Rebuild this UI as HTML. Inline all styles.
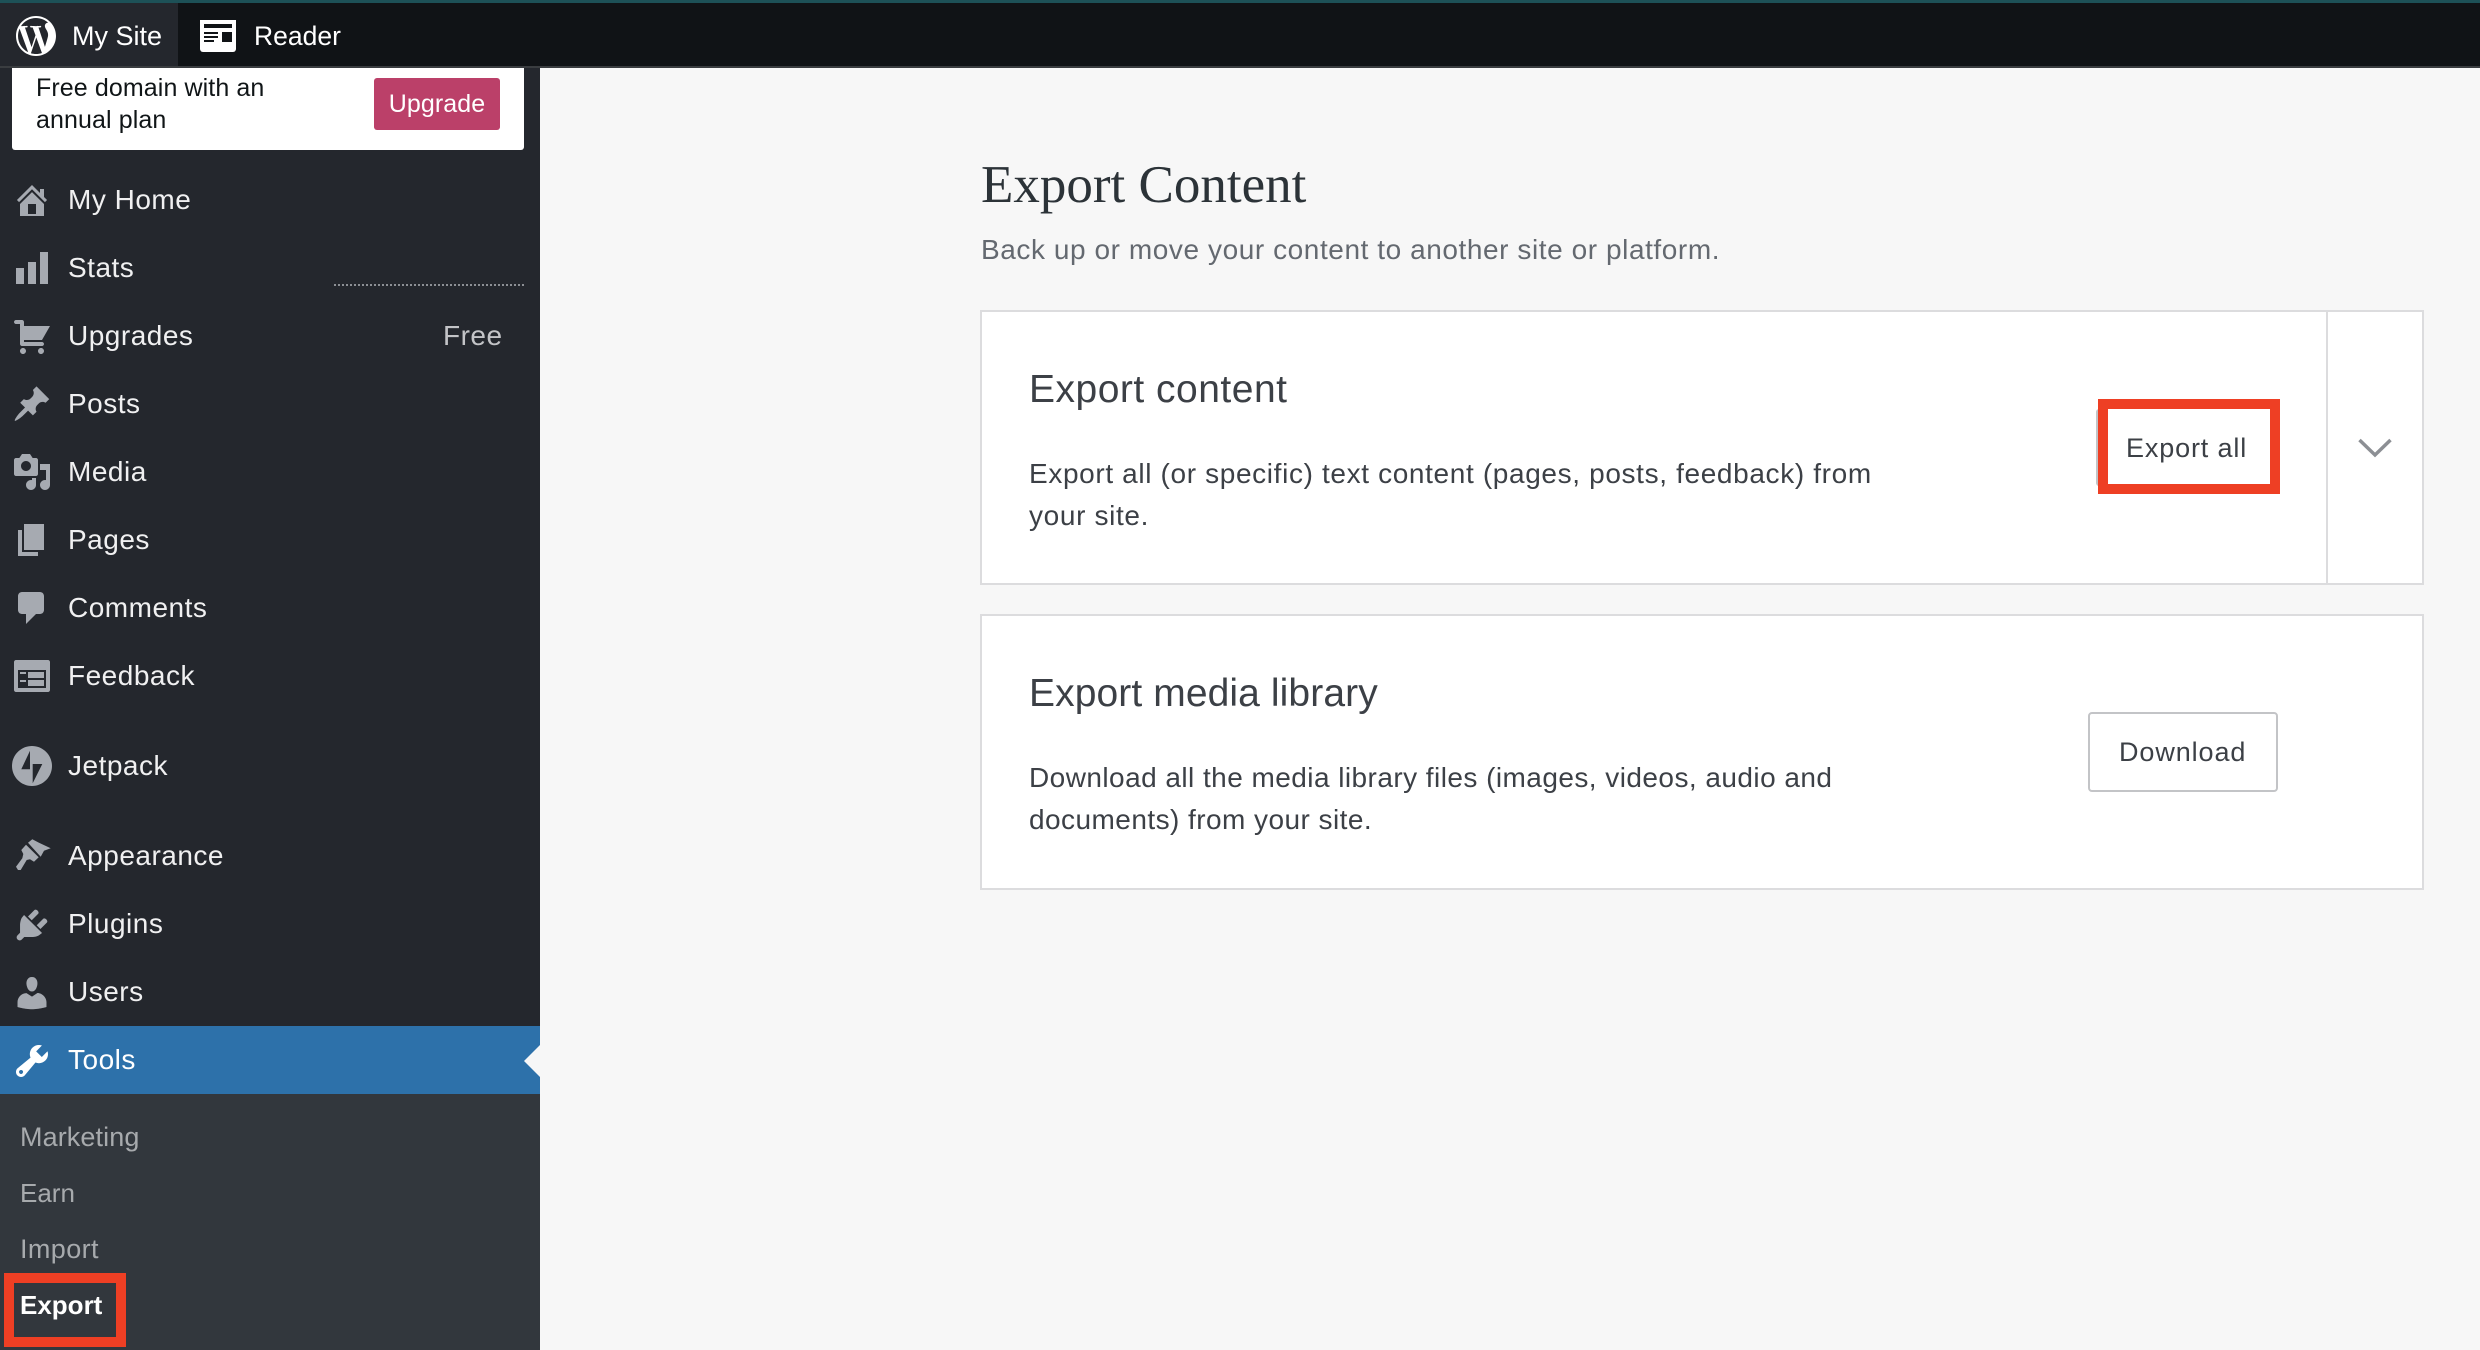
<!DOCTYPE html>
<html lang="en">
<head>
<meta charset="utf-8">
<title>Export Content</title>
<style>
html,body{margin:0;padding:0;width:2480px;height:1350px;overflow:hidden;background:#f7f7f7;font-family:"Liberation Sans",sans-serif}
.a{position:absolute;white-space:nowrap}
#bar{left:0;top:0;width:2480px;height:68px;background:#101316;border-bottom:0}
#side{left:0;top:68px;width:540px;height:1282px;background:#24272d}
.m{left:68px;font-size:28px;letter-spacing:.5px;line-height:40px;color:#f0f0f1}
.i{left:12px;width:40px;height:40px;fill:#a6aab1}
.s{left:20px;font-size:27px;letter-spacing:.1px;line-height:40px;color:#a7aaad}
.card{background:#fff;border:2px solid #dcdcde;box-sizing:border-box}
.t{font-size:39px;letter-spacing:.5px;line-height:48px;color:#3c4046;left:1029px}
.d{font-size:28px;letter-spacing:.64px;line-height:42px;color:#3c4046;left:1029px}
.b{font-size:27px;line-height:40px;color:#3c4046}
</style>
</head>
<body>
<div class="a" id="bar"></div>
<div class="a" style="left:0;top:0;width:2480px;height:3px;background:#1d5157"></div>
<div class="a" style="left:0;top:66px;width:2480px;height:2px;background:#3a3d40"></div>
<div class="a" style="left:0;top:3px;width:178px;height:63px;background:#24272d"></div>
<svg class="a" style="left:12px;top:12px;width:48px;height:48px;fill:#fff" viewBox="0 0 24 24"><path d="M12 2C6.486 2 2 6.486 2 12s4.486 10 10 10 10-4.486 10-10S17.514 2 12 2zM3.010 12c0-1.304.28-2.540.78-3.660l4.290 11.750c-3-1.460-5.070-4.530-5.070-8.090zM12 20.990c-.88 0-1.730-.13-2.540-.37l2.700-7.840 2.760 7.570c.02.04.04.09.06.12-.93.33-1.940.52-2.980.52zm1.240-13.210c.54-.03 1.030-.09 1.030-.09.48-.06.43-.77-.06-.74 0 0-1.460.11-2.400.11-.88 0-2.370-.11-2.370-.11-.48-.03-.54.71-.05.74 0 0 .46.06.95.09l1.410 3.870-1.980 5.940-3.300-9.810c.55-.03 1.040-.09 1.040-.09.48-.06.43-.77-.06-.74 0 0-1.460.11-2.400.11-.17 0-.37 0-.58-.01C6.100 4.600 8.870 3.010 12 3.010c2.330 0 4.460.89 6.050 2.350-.04 0-.08-.01-.12-.01-.88 0-1.500.77-1.500 1.590 0 .74.43 1.370.88 2.110.34.6.74 1.370.74 2.480 0 .77-.3 1.660-.68 2.910l-.9 3-3.230-9.660zm3.280 12c2.760-1.610 4.470-4.580 4.470-7.780 0-1.570-.41-3.040-1.100-4.300.04.29.06.59.06.93 0 .92-.17 1.950-.69 3.240l-2.740 7.910z"/></svg>
<div class="a" style="left:72px;top:16px;font-size:27px;line-height:40px;color:#fff">My Site</div>
<svg class="a" style="left:200px;top:20px;width:36px;height:32px" viewBox="0 0 36 32"><path fill="#fff" d="M0 0h36v29a3 3 0 0 1-3 3H3a3 3 0 0 1-3-3z"/><path fill="#101316" d="M4 4h28v4H4zM4 12h14v2H4zM4 16h14v2H4zM4 20h10v2H4zM22 12h10v10H22z"/></svg>
<div class="a" style="left:254px;top:16px;font-size:26.500px;line-height:40px;color:#fff">Reader</div>

<div class="a" id="side"></div>
<div class="a" style="left:12px;top:68px;width:512px;height:82px;background:#fff;border-radius:0 0 3px 3px"></div>
<div class="a" style="left:36px;top:72px;font-size:25px;letter-spacing:.1px;line-height:32px;color:#101517">Free domain with an<br>annual plan</div>
<div class="a" style="left:374px;top:78px;width:126px;height:52px;background:#bb4069;border-radius:3px;color:#fff;font-size:25px;letter-spacing:.1px;line-height:53px;text-align:center">Upgrade</div>
<div class="a" style="left:334px;top:284px;width:190px;height:0;border-top:2px dotted #8c8f94"></div>

<svg class="a i" style="top:180px" viewBox="0 0 20 20"><path d="M16 8.500l1.530 1.530-1.060 1.060L10 4.620l-6.470 6.470-1.060-1.060L10 2.500l4 4v-2h2v4zm-6-2.460l6 5.990V18H4v-5.970zM12 17v-5H8v5h4z"/></svg>
<div class="a m" style="top:180px">My Home</div>
<svg class="a i" style="top:248px" viewBox="0 0 20 20"><path d="M18 18V2h-4v16h4zm-6 0V7H8v11h4zm-6 0v-8H2v8h4z"/></svg>
<div class="a m" style="top:248px">Stats</div>
<svg class="a i" style="top:316px" viewBox="0 0 20 20"><path d="M6 13h9c.55 0 1 .45 1 1s-.45 1-1 1H5c-.55 0-1-.45-1-1V4H2c-.55 0-1-.45-1-1s.45-1 1-1h3c.55 0 1 .45 1 1v2h13l-4 7H6v1zm-.5 3c.83 0 1.500.67 1.500 1.500S6.330 19 5.500 19 4 18.330 4 17.500 4.670 16 5.500 16zm9 0c.83 0 1.500.67 1.500 1.500s-.67 1.500-1.500 1.500-1.500-.67-1.500-1.500.67-1.500 1.500-1.500z"/></svg>
<div class="a m" style="top:316px">Upgrades</div>
<div class="a m" style="top:316px;left:443px;color:#c3c4c7">Free</div>
<svg class="a i" style="top:384px" viewBox="0 0 20 20"><path d="M10.440 3.020l1.820-1.820 6.360 6.350-1.830 1.820c-1.050-.68-2.480-.57-3.410.36l-.75.75c-.92.93-1.040 2.350-.35 3.410l-1.830 1.820-2.410-2.410-2.800 2.790c-.42.42-3.380 2.710-3.800 2.290s1.860-3.390 2.280-3.810l2.790-2.790L4.100 9.360l1.830-1.820c1.050.69 2.480.57 3.400-.36l.75-.75c.93-.92 1.050-2.350.36-3.410z"/></svg>
<div class="a m" style="top:384px">Posts</div>
<svg class="a i" style="top:452px" viewBox="0 0 20 20"><path d="M13 11V4c0-.55-.45-1-1-1h-1.670L9 1H5L3.670 3H2c-.55 0-1 .45-1 1v7c0 .55.45 1 1 1h10c.55 0 1-.45 1-1zM7 4.500c1.380 0 2.500 1.120 2.500 2.500S8.380 9.500 7 9.500 4.500 8.380 4.500 7 5.620 4.500 7 4.500zM14 6h5v10.500c0 1.380-1.120 2.500-2.500 2.500S14 17.880 14 16.500s1.120-2.500 2.500-2.500c.17 0 .34.02.5.05V9h-3V6zm-4 8.050V13h2v3.500c0 1.380-1.120 2.500-2.500 2.500S7 17.880 7 16.500 8.120 14 9.500 14c.17 0 .34.02.5.05z"/></svg>
<div class="a m" style="top:452px">Media</div>
<svg class="a i" style="top:520px" viewBox="0 0 20 20"><path d="M6 15V2h10v13H6zm-1 1h8v2H3V5h2v11z"/></svg>
<div class="a m" style="top:520px">Pages</div>
<svg class="a i" style="top:588px" viewBox="0 0 20 20"><path d="M5 2h9c1.100 0 2 .9 2 2v7c0 1.100-.9 2-2 2h-2l-5 5v-5H5c-1.100 0-2-.9-2-2V4c0-1.100.9-2 2-2z"/></svg>
<div class="a m" style="top:588px">Comments</div>
<svg class="a i" style="top:656px" viewBox="0 0 20 20"><path d="M2 2h16c.55 0 1 .45 1 1v14c0 .55-.45 1-1 1H2c-.55 0-1-.45-1-1V3c0-.55.45-1 1-1zm15 14V7H3v9h14zM4 8v1h3V8H4zm4 0v3h8V8H8zm-4 4v1h3v-1H4zm4 0v3h8v-3H8z"/></svg>
<div class="a m" style="top:656px">Feedback</div>
<svg class="a i" style="top:746px" viewBox="0 0 40 40"><path fill-rule="evenodd" d="M20 0C9 0 0 9 0 20s9 20 20 20 20-9 20-20S31 0 20 0zM18 4.700L9.300 23.300H18zM20.700 37.300V18h9.600z"/></svg>
<div class="a m" style="top:746px">Jetpack</div>
<svg class="a i" style="top:837px" viewBox="0 0 40 40"><path d="M16 5.700L20.300 2.300 27 5.700 38.700 11.300 32 13.700 28.700 19.700zM14 7.700L26.700 20.300 22 24.700 18 22.300 14.700 23 8.700 33 6 33 4 29.700 10.300 21.300 11.300 17 9.300 13z"/></svg>
<div class="a m" style="top:836px">Appearance</div>
<svg class="a i" style="top:905px" viewBox="0 0 20 20"><path d="M13.110 4.360L9.870 7.600 8 5.730l3.240-3.240c.35-.34 1.050-.2 1.560.32.52.51.66 1.210.31 1.550zm-8 1.770l.91-1.120 9.010 9.010-1.190.84c-.71.71-2.630 1.160-3.820 1.160H6.140L4.900 17.260c-.59.59-1.540.59-2.120 0-.59-.58-.59-1.530 0-2.120l1.240-1.240v-3.880c0-1.130.4-3.190 1.090-3.890zm7.260 3.970l3.240-3.240c.34-.35 1.040-.21 1.550.31.52.51.66 1.210.31 1.550l-3.240 3.250z"/></svg>
<div class="a m" style="top:904px">Plugins</div>
<svg class="a i" style="top:973px" viewBox="0 0 20 20"><path d="M10 9.250c-2.270 0-2.730-3.440-2.730-3.440C7 4.020 7.820 2 9.970 2c2.160 0 2.980 2.020 2.710 3.810 0 0-.41 3.440-2.680 3.440zm0 2.570L12.720 10c2.390 0 4.520 2.330 4.520 4.530v2.490s-3.650 1.130-7.240 1.130c-3.650 0-7.240-1.130-7.240-1.130v-2.490c0-2.250 1.940-4.480 4.470-4.480z"/></svg>
<div class="a m" style="top:972px">Users</div>

<div class="a" style="left:0;top:1026px;width:540px;height:68px;background:#2d71aa"></div>
<div class="a" style="left:524px;top:1045px;width:0;height:0;border-top:16px solid transparent;border-bottom:16px solid transparent;border-right:16px solid #f7f7f7"></div>
<svg class="a i" style="top:1041px;fill:#fff" viewBox="0 0 20 20"><path d="M16.680 9.770c-1.340 1.340-3.300 1.670-4.950.99l-5.410 6.520c-.99.99-2.590.99-3.580 0s-.99-2.590 0-3.570l6.520-5.420c-.68-1.650-.35-3.610.99-4.950 1.280-1.280 3.120-1.620 4.720-1.060l-2.890 2.890 2.820 2.820 2.860-2.870c.53 1.580.18 3.390-1.080 4.650zM3.810 16.210c.4.39 1.040.39 1.430 0 .4-.4.4-1.040 0-1.430-.39-.4-1.030-.4-1.430 0-.39.39-.39 1.030 0 1.430z"/></svg>
<div class="a m" style="top:1040px;color:#fff">Tools</div>

<div class="a" style="left:0;top:1094px;width:540px;height:256px;background:#32373d"></div>
<div class="a s" style="top:1117px">Marketing</div>
<div class="a s" style="top:1173px;font-size:26px;letter-spacing:0">Earn</div>
<div class="a s" style="top:1229px;letter-spacing:.4px">Import</div>
<div class="a" style="left:4px;top:1273px;width:122px;height:74px;box-sizing:border-box;border:10px solid #ee3f24"></div>
<div class="a s" style="top:1285px;color:#fff;font-size:26px;font-weight:bold;letter-spacing:0">Export</div>

<div class="a" style="left:981px;top:155px;font-family:'Liberation Serif',serif;font-size:53px;line-height:60px;color:#2c3338">Export Content</div>
<div class="a" style="left:981px;top:229px;font-size:28px;letter-spacing:.57px;line-height:42px;color:#646970">Back up or move your content to another site or platform.</div>

<div class="a card" style="left:980px;top:310px;width:1444px;height:275px"></div>
<div class="a" style="left:2326px;top:311px;width:2px;height:273px;background:#dcdcde"></div>
<div class="a t" style="top:366px">Export content</div>
<div class="a d" style="top:453px">Export all (or specific) text content (pages, posts, feedback) from<br>your site.</div>
<div class="a" style="left:2096px;top:409px;width:6px;height:77px;background:#c3c4c7;border-radius:3px 0 0 3px"></div>
<div class="a" style="left:2098px;top:399px;width:182px;height:95px;box-sizing:border-box;border:solid #ee3f24;border-width:10px;background:#fff"></div>
<div class="a b" style="left:2126px;top:428px;letter-spacing:.85px">Export all</div>
<svg class="a" style="left:2356px;top:436px;width:38px;height:26px" viewBox="0 0 38 26"><path d="M3.500 4L19 19 34.500 4" fill="none" stroke="#8c8f94" stroke-width="3.500"/></svg>

<div class="a card" style="left:980px;top:614px;width:1444px;height:276px"></div>
<div class="a t" style="top:670px;letter-spacing:.1px">Export media library</div>
<div class="a d" style="top:757px;letter-spacing:.45px">Download all the media library files (images, videos, audio and<br>documents) from your site.</div>
<div class="a" style="left:2088px;top:712px;width:190px;height:80px;box-sizing:border-box;border:2px solid #c3c4c7;border-radius:4px;background:#fff"></div>
<div class="a b" style="left:2119px;top:732px;letter-spacing:.9px">Download</div>
</body>
</html>
